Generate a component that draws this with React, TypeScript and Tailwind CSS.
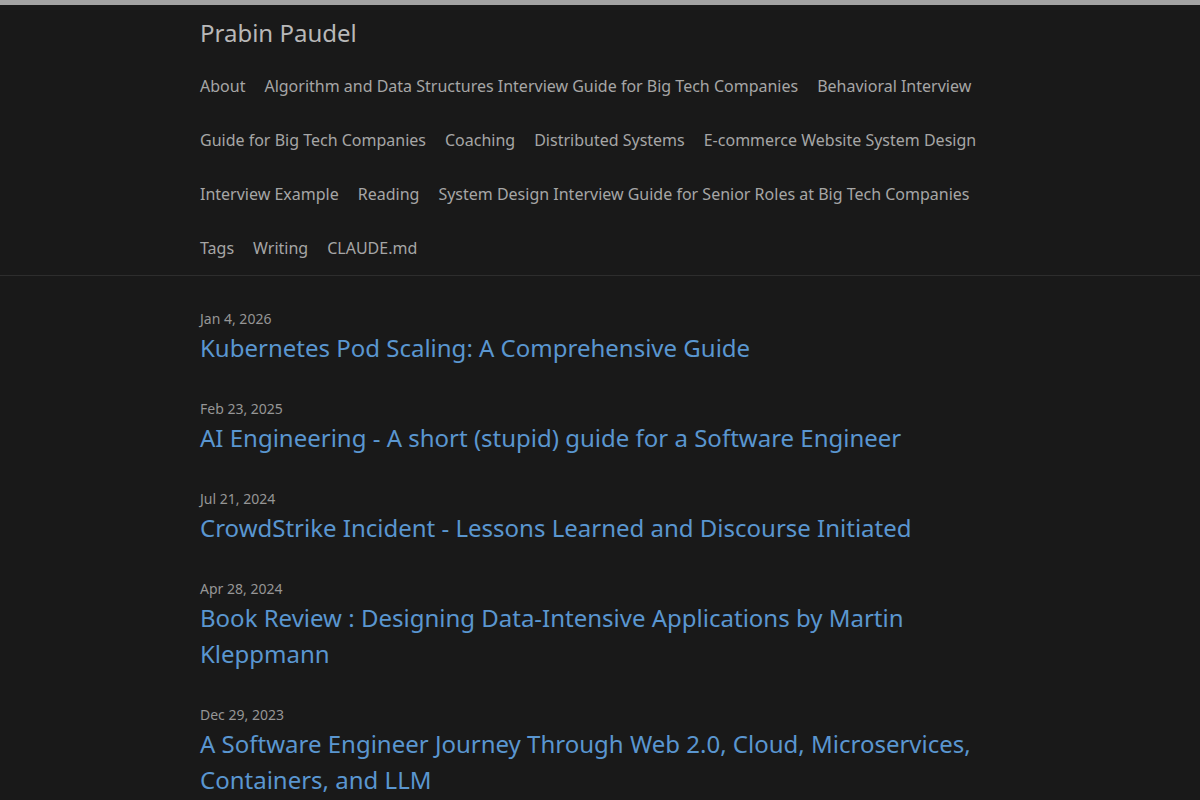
import React from "react";

const nav = [
  "About",
  "Algorithm and Data Structures Interview Guide for Big Tech Companies",
  "Behavioral Interview Guide for Big Tech Companies",
  "Coaching",
  "Distributed Systems",
  "E-commerce Website System Design Interview Example",
  "Reading",
  "System Design Interview Guide for Senior Roles at Big Tech Companies",
  "Tags",
  "Writing",
  "CLAUDE.md",
];

const posts = [
  { date: "Jan 4, 2026", title: "Kubernetes Pod Scaling: A Comprehensive Guide" },
  { date: "Feb 23, 2025", title: "AI Engineering - A short (stupid) guide for a Software Engineer" },
  { date: "Jul 21, 2024", title: "CrowdStrike Incident - Lessons Learned and Discourse Initiated" },
  { date: "Apr 28, 2024", title: "Book Review : Designing Data-Intensive Applications by Martin Kleppmann" },
  { date: "Dec 29, 2023", title: "A Software Engineer Journey Through Web 2.0, Cloud, Microservices, Containers, and LLM" },
  { date: "Nov 12, 2023", title: "Distributed Systems Overview" },
];

export default function App() {
  return (
    <div
      className="bg-[#191919] h-[800px] overflow-hidden"
      style={{ fontFamily: '"Noto Sans", "Open Sans", sans-serif' }}
    >
      <div className="h-[5px] bg-[#a3a3a3]" />
      <header className="border-b border-[#2d2d2d]">
        <div className="w-[800px] mx-auto pt-[10px]">
          <div className="text-[24px] leading-[36px] text-[#b8b8b8]">Prabin Paudel</div>
          <nav className="mt-[8px] text-[16px] leading-[54px] text-[#a6a6a6]">
            {nav.map((n) => (
              <React.Fragment key={n}>
                <a className="mr-[19px]" href="#">
                  {n}
                </a>
                {"\u200B"}
              </React.Fragment>
            ))}
          </nav>
        </div>
      </header>
      <main className="w-[800px] mx-auto pt-[33px]">
        {posts.map((p) => (
          <div key={p.date} className="mb-[33px]">
            <div className="text-[14px] leading-[20px] text-[#969696]">{p.date}</div>
            <a href="#" className="block mt-[1px] text-[24px] leading-[36px] text-[#5a96d0]">
              {p.title}
            </a>
          </div>
        ))}
      </main>
    </div>
  );
}
